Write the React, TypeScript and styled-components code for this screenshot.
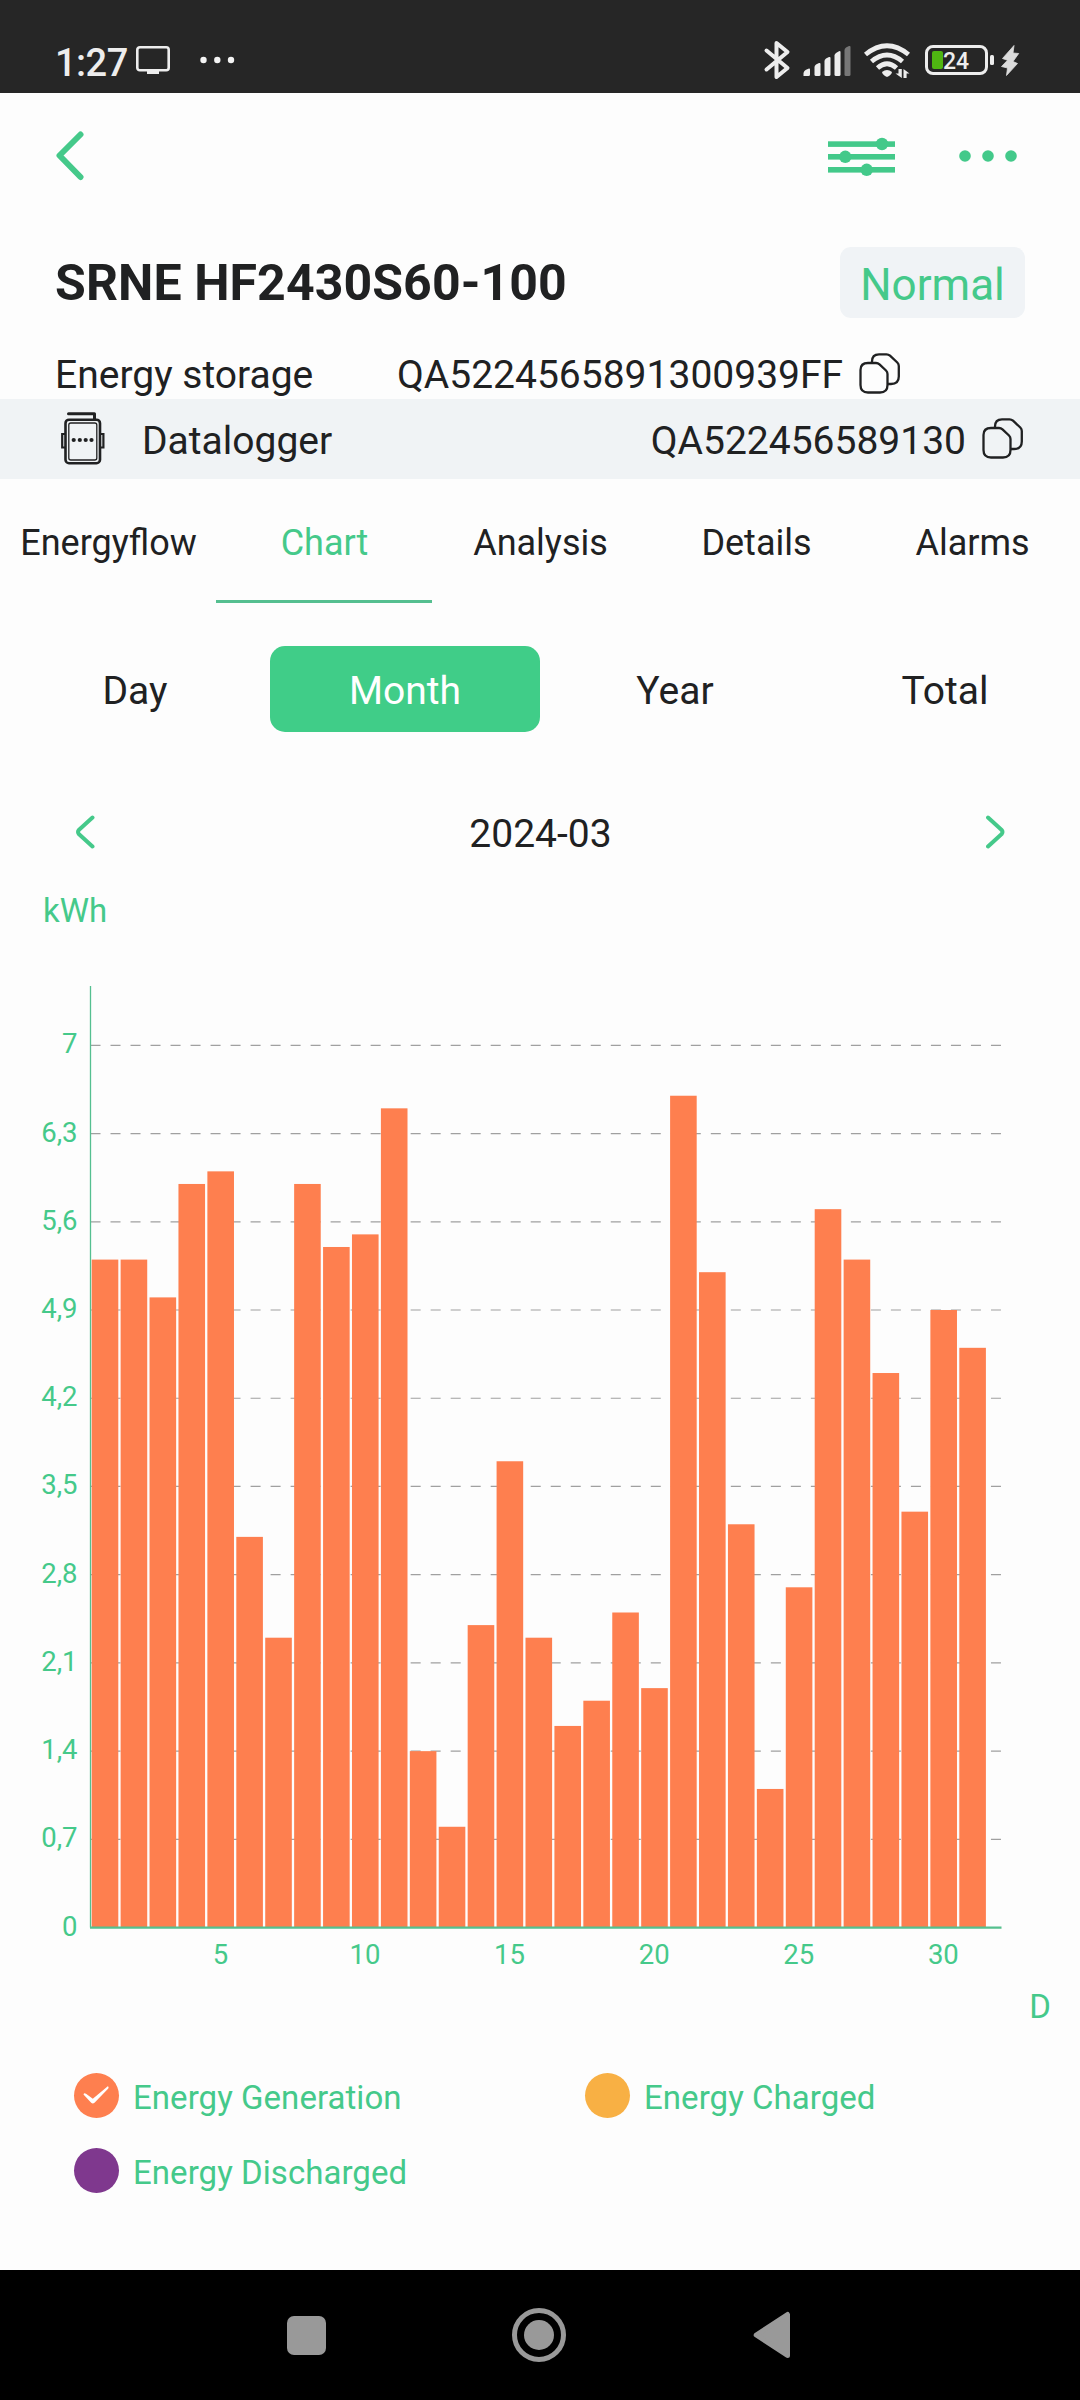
import React from "react";
import styled, { createGlobalStyle } from "styled-components";

const green = "#45c98a";
const ink = "#202122";

const GlobalStyle = createGlobalStyle`
  *, *::before, *::after { box-sizing: border-box; }
  body { margin: 0; background: #fdfdfd; }
  svg { display: block; flex: none; }
`;

const Screen = styled.div`
  width: 1080px;
  height: 2400px;
  display: flex;
  flex-direction: column;
  overflow: hidden;
  background: #fdfdfd;
  color: ${ink};
  font-family: Roboto, "Liberation Sans", sans-serif;
  white-space: nowrap;
`;

const StatusBar = styled.header`
  flex: none;
  height: 93px;
  padding: 28px 60px 0 55px;
  display: flex;
  justify-content: space-between;
  background: #262626;
  color: #ededed;
`;

const StatusGroup = styled.div`
  display: flex;
  align-items: center;
  height: 64px;
`;

const Clock = styled.span`
  width: 81px;
  padding-top: 5px;
  font-size: 38px;
  font-weight: 500;
  line-height: 46px;
  letter-spacing: -0.5px;
`;

const NavHeader = styled.nav`
  flex: none;
  height: 126px;
  padding: 0 63px 0 56px;
  display: flex;
  align-items: center;
  justify-content: space-between;
`;

const IconButton = styled.button`
  padding: 0;
  border: 0;
  background: none;
  color: inherit;
`;

const HeaderActions = styled.div`
  display: flex;
  align-items: center;
  gap: 63px;
`;

const TitleRow = styled.div`
  flex: none;
  height: 71px;
  margin-top: 28px;
  padding: 0 55px;
  display: flex;
  align-items: center;
  justify-content: space-between;
`;

const Title = styled.h1`
  margin: 0;
  font-size: 50px;
  font-weight: 700;
  line-height: 60px;
  letter-spacing: 0.1px;
`;

const StatusBadge = styled.span`
  width: 185px;
  height: 71px;
  padding-top: 3px;
  border-radius: 11px;
  background: #f0f3f6;
  color: ${green};
  font-size: 44px;
  line-height: 71px;
  text-align: center;
`;

const InfoRow = styled.div`
  flex: none;
  height: 52px;
  margin-top: 29px;
  padding-left: 55px;
  display: flex;
  align-items: center;
`;

const LoggerRow = styled.div`
  flex: none;
  height: 80px;
  padding: 0 56px 1px 61px;
  display: flex;
  align-items: center;
  background: #f0f3f5;
`;

const InfoText = styled.span<{ $width?: number }>`
  width: ${({ $width }) => ($width ? `${$width}px` : "auto")};
  padding-top: 4px;
  font-size: 39px;
  line-height: 46px;
`;

const LoggerName = styled(InfoText)`
  margin-left: 37px;
  flex: 1;
`;

const CopySlot = styled(IconButton)`
  margin-left: 16px;
`;

const Tabs = styled.div`
  flex: none;
  height: 124px;
  display: grid;
  grid-template-columns: repeat(5, 1fr);
`;

const Tab = styled.button<{ $active?: boolean }>`
  padding: 6px 0 0 1px;
  border: 0;
  border-bottom: 3px solid ${({ $active }) => ($active ? "#55bf90" : "transparent")};
  background: none;
  color: ${({ $active }) => ($active ? green : ink)};
  font: 400 36px/44px Roboto, "Liberation Sans", sans-serif;
`;

const Periods = styled.div`
  flex: none;
  height: 86px;
  margin-top: 43px;
  display: grid;
  grid-template-columns: repeat(4, 1fr);
`;

const Period = styled.button<{ $active?: boolean }>`
  padding: 3px 0 0;
  border: 0;
  border-radius: 15px;
  background: ${({ $active }) => ($active ? "#40cd88" : "none")};
  color: ${({ $active }) => ($active ? "#fff" : ink)};
  font: 400 39px/46px Roboto, "Liberation Sans", sans-serif;
`;

const DateRow = styled.div`
  flex: none;
  height: 94px;
  margin-top: 53px;
  padding: 0 75px 0 76px;
  display: flex;
  align-items: center;
  justify-content: space-between;
`;

const DateText = styled.span`
  padding-top: 3px;
  font-size: 39px;
  line-height: 46px;
`;

const UnitY = styled.div`
  flex: none;
  height: 52px;
  padding: 11px 0 0 43px;
  color: ${green};
  font-size: 33px;
  line-height: 41px;
`;

const UnitX = styled.div`
  flex: none;
  height: 54px;
  padding-right: 29px;
  color: ${green};
  font-size: 33px;
  line-height: 54px;
  text-align: right;
`;

const Legend = styled.div`
  flex: none;
  margin-top: 39px;
  padding-left: 74px;
  display: grid;
  grid-template-columns: 511px 1fr;
  row-gap: 30px;
`;

const LegendItem = styled.div`
  height: 45px;
  display: flex;
  align-items: center;
  gap: 14px;
  color: ${green};
  font-size: 33px;
  line-height: 40px;
`;

const LegendLabel = styled.span`
  padding-top: 4px;
  letter-spacing: 0.05px;
`;

const Dot = styled.span<{ $color: string }>`
  flex: none;
  width: 45px;
  height: 45px;
  border-radius: 50%;
  background: ${({ $color }) => $color};
`;

const SystemNav = styled.footer`
  flex: none;
  height: 130px;
  margin-top: auto;
  padding-left: 287px;
  display: flex;
  align-items: center;
  background: #000;
`;

const RecentsKey = styled.span`
  width: 39px;
  height: 39px;
  border-radius: 7px;
  background: #999;
`;

const HomeKey = styled.span`
  width: 54px;
  height: 54px;
  margin: 0 187px 0 186px;
  border: 5px solid #999;
  border-radius: 50%;
  padding: 7px;
  background: #999 content-box;
  display: block;
`;

const CastIcon = () => (
  <svg width="34" height="30" viewBox="0 0 34 30">
    <rect x="1.3" y="2.3" width="31.4" height="23" rx="2.5" fill="none" stroke="#ededed" strokeWidth="2.6" />
    <rect x="11" y="25" width="12" height="4" fill="#ededed" />
  </svg>
);

const NoticeSvg = styled.svg`
  margin-left: 29px;
`;

const NoticeDots = () => (
  <NoticeSvg width="36" height="10" viewBox="0 0 36 10" fill="#f4f4f4">
    <circle cx="4.5" cy="5" r="3.2" />
    <circle cx="18.3" cy="5" r="3.2" />
    <circle cx="32" cy="5" r="3.2" />
  </NoticeSvg>
);

const StatusIcons = () => (
  <svg width="260" height="44" viewBox="760 38 260 44" fill="#ededed">
    <path
      d="M766.5 50.5 L787.5 68 L776.5 77 V43 L787.5 52 L766.5 69.5"
      fill="none"
      stroke="#ededed"
      strokeWidth="4"
      strokeLinejoin="round"
      strokeLinecap="round"
    />
    <path d="M803.5 76 V73 Q804 70.500 806 69.800 L809 68.500 Q810 68.300 810 69.500 V74.500 Q810 76 808.500 76Z" />
    <path d="M814.500 74.500 V67 Q814.500 65.500 816 64.500 L819 63 Q820.500 62.500 820.500 64 V74.500 Q820.500 76 819 76 H816 Q814.500 76 814.500 74.500Z" />
    <path d="M824.500 74.500 V61 Q824.500 59.500 826 58.500 L829 57 Q830.500 56.500 830.500 58 V74.500 Q830.500 76 829 76 H826 Q824.500 76 824.500 74.500Z" />
    <path d="M834.500 74.500 V55.500 Q834.500 54 836 53 L839 51.200 Q840.500 50.500 840.500 52 V74.500 Q840.500 76 839 76 H836 Q834.500 76 834.500 74.500Z" />
    <path fill="#777" d="M844.500 74.500 V50 Q844.500 48.500 846 47.500 L849 46 Q850.500 45.500 850.500 47 V74.500 Q850.500 76 849 76 H846 Q844.500 76 844.500 74.500Z" />
    <g fill="none" stroke="#ededed" strokeWidth="4.800">
      <path d="M865.500 54.500 Q887 37 908.500 54.500" />
      <path d="M871.500 61.500 Q887 48.500 902.500 61.500" />
      <path d="M877.500 68 Q887 59.500 896.500 68" />
    </g>
    <path d="M882 72 Q887 67.800 892 72 Q891.500 75 887 77 Q882.500 75 882 72Z" />
    <path d="M901.800 69 V78 L895.500 73.500 H898.500 V69Z M903.500 78 V69 L909.500 73.500 H906.600 V78Z" />
    <rect x="926.500" y="46.500" width="60" height="27" rx="6.500" fill="none" stroke="#ededed" strokeWidth="3" />
    <rect x="990" y="55" width="4" height="10" rx="1.500" />
    <rect x="932" y="51" width="11" height="18" rx="2" fill="#4fb512" />
    <text x="943" y="69" fontSize="23" fontWeight="500" fontFamily="Roboto, sans-serif">24</text>
    <path
      fill="#dcdcdc"
      stroke="#dcdcdc"
      strokeWidth="0.8"
      strokeLinejoin="round"
      d="M1014 45.500 L1002.500 58.500 L1007.500 60.300 L1001.500 66.500 L1007.500 68 L1006.500 75.500 L1017.500 63.500 L1013 61.500 L1018.700 53.500 L1013 53Z"
    />
  </svg>
);

const BackIcon = () => (
  <svg width="28" height="50" viewBox="56 131 28 50" fill="none" stroke={green} strokeWidth="6" strokeLinecap="round" strokeLinejoin="round">
    <path d="M80.500 134.500 L59.500 155.500 L80.500 177" />
  </svg>
);

const SlidersIcon = () => (
  <svg width="68" height="40" viewBox="828 136 68 40" fill="#43c98a">
    <rect x="828" y="141.300" width="67" height="5.600" />
    <rect x="828" y="154" width="67" height="5.600" />
    <rect x="828" y="167" width="67" height="5.600" />
    <circle cx="882" cy="144" r="6.200" />
    <circle cx="845.300" cy="156.800" r="6.200" />
    <circle cx="866.700" cy="169.800" r="6.200" />
  </svg>
);

const MoreIcon = () => (
  <svg width="58" height="12" viewBox="959 151 58 12" fill="#43c98a">
    <circle cx="965" cy="157" r="5.800" />
    <circle cx="988" cy="157" r="5.800" />
    <circle cx="1011" cy="157" r="5.800" />
  </svg>
);

const CopyIcon = () => (
  <svg width="42" height="41" viewBox="0 0 42 41" fill="none" stroke={ink} strokeWidth="2.300" strokeLinejoin="round">
    <path d="M9 10 H17 Q19 10 20.500 11.300 L27 17.500 Q28.500 19 28.500 21 V32 Q28.500 39.500 21 39.500 H9 Q1.500 39.500 1.500 32 V17 Q1.500 10 9 10Z" />
    <path d="M13 10 V8.500 Q13 1.300 20 1.300 H27.500 Q29.500 1.300 31 2.700 L38.300 9.500 Q39.800 11 39.800 13 V23.500 Q39.800 31 32 31 H28.500" />
  </svg>
);

const LoggerIcon = () => (
  <svg width="44" height="53" viewBox="0 0 44 53" fill="none" stroke={ink}>
    <path d="M7.500 1.800 H33.500 V7" strokeWidth="3" strokeLinejoin="round" strokeLinecap="round" />
    <rect x="4.500" y="7.700" width="34.500" height="43.500" rx="3.500" strokeWidth="2.600" />
    <rect x="7.800" y="11" width="28" height="37" rx="2" strokeWidth="1.300" />
    <path d="M4 22 H1.200 V35.500 H4 M39.500 22 H42.400 V35.500 H39.500" strokeWidth="2.200" />
    <g fill={ink} stroke="none">
      <circle cx="12.700" cy="28" r="2.100" />
      <circle cx="18.800" cy="28" r="2.100" />
      <circle cx="24.700" cy="28" r="2.100" />
      <circle cx="30.500" cy="28" r="2.100" />
    </g>
  </svg>
);

const ArrowIcon = ({ next }: { next?: boolean }) => (
  <svg width="19" height="34" viewBox="0 0 19 34" fill="none" stroke={green} strokeWidth="4" strokeLinecap="round" strokeLinejoin="round">
    <path d={next ? "M2 2.500 L15.700 15 Q17.200 17 15.700 19 L2 31.500" : "M16.500 2.500 L2.800 15 Q1.300 17 2.800 19 L16.500 31.500"} />
  </svg>
);

const CheckIcon = () => (
  <svg width="45" height="45" viewBox="0 0 45 45" fill="#fff">
    <path d="M9.500 21.500 Q10 19.500 12 20.800 L18.800 25.800 L33.800 13.200 Q35.200 13.800 34.300 15.500 L20.500 29.800 Q18.800 31.300 17.200 29.800Z" />
  </svg>
);

const BackKey = () => (
  <svg width="38" height="48" viewBox="0 0 38 48" fill="#999" stroke="#999" strokeWidth="5" strokeLinejoin="round">
    <path d="M3.200 24 L34.500 3.500 V44.500Z" />
  </svg>
);

const readings = [
  5.3, 5.3, 5, 5.9, 6, 3.1, 2.3, 5.9, 5.4, 5.5, 6.5, 1.4, 0.8, 2.4, 3.7, 2.3,
  1.6, 1.8, 2.5, 1.9, 6.6, 5.2, 3.2, 1.1, 2.7, 5.7, 5.3, 4.4, 3.3, 4.9, 4.6,
];
const BASE = 996.6;
const UNIT = 126.04;
const PITCH = 28.92;

const AxisText = styled.text`
  fill: ${green};
  font-size: 27.5px;
`;

const Chart = () => (
  <svg width="1080" height="1049" viewBox="0 0 1080 1049">
    {Array.from({ length: 10 }, (_, i) => {
      const y = BASE - (i + 1) * 0.7 * UNIT;
      return <line key={i} x1="90.500" x2="1001" y1={y} y2={y} stroke="#a0a0a0" strokeWidth="1.200" strokeDasharray="10 10.010" />;
    })}
    <line x1="90.500" x2="90.500" y1="55" y2={BASE} stroke="#55bf90" strokeWidth="1.300" />
    {readings.map((v, i) => (
      <rect key={i} x={91.7 + i * PITCH} y={BASE - v * UNIT} width="26.600" height={v * UNIT} fill="#fe7f4f" />
    ))}
    <line x1="90" x2="1001.500" y1={BASE} y2={BASE} stroke="#55c08e" strokeWidth="2.400" />
    {Array.from({ length: 11 }, (_, i) => (
      <AxisText key={i} x="77.500" y={BASE + 8 - i * 0.7 * UNIT} textAnchor="end">
        {String(Math.round(i * 7) / 10).replace(".", ",")}
      </AxisText>
    ))}
    {[5, 10, 15, 20, 25, 30].map((d) => (
      <AxisText key={d} x={92 + (d - 1) * PITCH + 12.7} y="1032.500" textAnchor="middle">
        {d}
      </AxisText>
    ))}
  </svg>
);

export default function App() {
  return (
    <>
      <GlobalStyle />
      <Screen>
        <StatusBar>
          <StatusGroup>
            <Clock>1:27</Clock>
            <CastIcon />
            <NoticeDots />
          </StatusGroup>
          <StatusGroup>
            <StatusIcons />
          </StatusGroup>
        </StatusBar>

        <NavHeader>
          <IconButton><BackIcon /></IconButton>
          <HeaderActions>
            <IconButton><SlidersIcon /></IconButton>
            <IconButton><MoreIcon /></IconButton>
          </HeaderActions>
        </NavHeader>

        <TitleRow>
          <Title>SRNE HF2430S60-100</Title>
          <StatusBadge>Normal</StatusBadge>
        </TitleRow>

        <InfoRow>
          <InfoText $width={342}>Energy storage</InfoText>
          <InfoText>QA5224565891300939FF</InfoText>
          <CopySlot><CopyIcon /></CopySlot>
        </InfoRow>

        <LoggerRow>
          <LoggerIcon />
          <LoggerName>Datalogger</LoggerName>
          <InfoText>QA522456589130</InfoText>
          <CopySlot><CopyIcon /></CopySlot>
        </LoggerRow>

        <Tabs>
          <Tab>Energyflow</Tab>
          <Tab $active>Chart</Tab>
          <Tab>Analysis</Tab>
          <Tab>Details</Tab>
          <Tab>Alarms</Tab>
        </Tabs>

        <Periods>
          <Period>Day</Period>
          <Period $active>Month</Period>
          <Period>Year</Period>
          <Period>Total</Period>
        </Periods>

        <DateRow>
          <IconButton><ArrowIcon /></IconButton>
          <DateText>2024-03</DateText>
          <IconButton><ArrowIcon next /></IconButton>
        </DateRow>

        <UnitY>kWh</UnitY>
        <Chart />
        <UnitX>D</UnitX>

        <Legend>
          <LegendItem>
            <Dot $color="#fe7f4f"><CheckIcon /></Dot>
            <LegendLabel>Energy Generation</LegendLabel>
          </LegendItem>
          <LegendItem>
            <Dot $color="#f8b044" />
            <LegendLabel>Energy Charged</LegendLabel>
          </LegendItem>
          <LegendItem>
            <Dot $color="#7f388e" />
            <LegendLabel>Energy Discharged</LegendLabel>
          </LegendItem>
        </Legend>

        <SystemNav>
          <RecentsKey />
          <HomeKey />
          <BackKey />
        </SystemNav>
      </Screen>
    </>
  );
}
